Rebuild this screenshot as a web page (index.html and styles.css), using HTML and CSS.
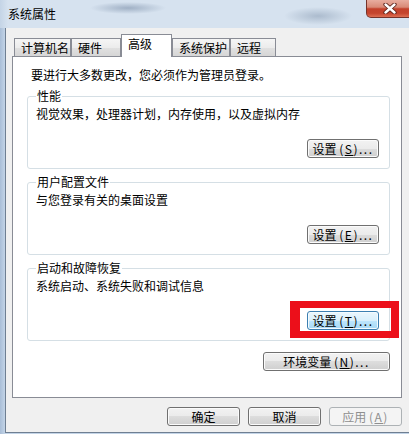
FILE: index.html
```html
<!DOCTYPE html>
<html lang="zh-CN">
<head>
<meta charset="utf-8">
<title>系统属性</title>
<link rel="stylesheet" href="styles.css">
</head>
<body>
<div class="window">
  <div class="titlebar">
    <span class="title">系统属性</span>
    <div class="close">
      <svg width="14" height="11" viewBox="0 0 14 11">
        <path d="M2.5 1.5 L11.5 9.5 M11.5 1.5 L2.5 9.5" stroke="#5a2119" stroke-width="4.2" stroke-linecap="round" fill="none"/>
        <path d="M2.5 1.5 L11.5 9.5 M11.5 1.5 L2.5 9.5" stroke="#ffffff" stroke-width="2.4" stroke-linecap="round" fill="none"/>
      </svg>
    </div>
  </div>
  <div class="client">
    <div class="tabs">
      <div class="tab tab-name">计算机名</div>
      <div class="tab tab-hw">硬件</div>
      <div class="tab tab-adv active">高级</div>
      <div class="tab tab-prot">系统保护</div>
      <div class="tab tab-remote">远程</div>
    </div>
    <div class="panel">
      <p class="intro">要进行大多数更改，您必须作为管理员登录。</p>
      <fieldset class="group">
        <legend>性能</legend>
        <p class="desc">视觉效果，处理器计划，内存使用，以及虚拟内存</p>
        <div class="group-actions"><button class="btn">设置 <span class="key">(<u>S</u>)...</span></button></div>
      </fieldset>
      <fieldset class="group">
        <legend>用户配置文件</legend>
        <p class="desc">与您登录有关的桌面设置</p>
        <div class="group-actions"><button class="btn">设置 <span class="key">(<u>E</u>)...</span></button></div>
      </fieldset>
      <fieldset class="group">
        <legend>启动和故障恢复</legend>
        <p class="desc">系统启动、系统失败和调试信息</p>
        <div class="group-actions"><button class="btn hot">设置 <span class="key">(<u>T</u>)...</span></button></div>
      </fieldset>
      <div class="panel-actions"><button class="btn wide">环境变量 <span class="key">(<u>N</u>)...</span></button></div>
      <div class="annotation"></div>
    </div>
    <div class="dialog-actions">
      <button class="btn dlg">确定</button>
      <button class="btn dlg">取消</button>
      <button class="btn dlg disabled">应用 <span class="key">(<u>A</u>)</span></button>
    </div>
  </div>
</div>
</body>
</html>
```

FILE: styles.css
```css
body {
  margin: 0;
  background: #ffffff;
  font-family: "Noto Sans CJK SC", "Liberation Sans", sans-serif;
  font-size: 12px;
  color: #000;
}

.window {
  width: 409px;
  height: 434px;
  overflow: hidden;
  display: flex;
  flex-direction: column;
  padding-bottom: 1px;
  box-sizing: border-box;
  background: linear-gradient(90deg, #a9bed7 0px, #c3d4e7 5px, #c3d4e7 100%);
}

.titlebar {
  height: 28px;
  flex: none;
  display: flex;
  align-items: flex-start;
  background:
    radial-gradient(ellipse 38px 6px at 128px 8px, rgba(115, 135, 162, 0.55), rgba(115, 135, 162, 0)),
    radial-gradient(ellipse 34px 9px at 318px 16px, rgba(120, 140, 165, 0.45), rgba(120, 140, 165, 0)),
    linear-gradient(90deg, #c4d4e6 0px, #d6e2ef 8px, #d6e2ef 100%);
}

.title {
  line-height: 28px;
  padding-left: 8px;
}

.close {
  margin-left: auto;
  margin-right: -5px;
  width: 48px;
  height: 18px;
  box-sizing: border-box;
  border: 1px solid #76332a;
  border-top: none;
  border-radius: 0 0 5px 5px;
  background: linear-gradient(#e8ad9f 0%, #d98a77 42%, #c3412b 52%, #c5452e 78%, #de6f53 100%);
  display: flex;
  align-items: center;
  justify-content: center;
}

.client {
  flex: 1;
  margin-left: 5px;
  border-left: 1px solid #6f7f92;
  border-bottom: 1px solid #6f7f92;
  background: #f0f0f0;
  padding-left: 6px;
}

.tabs {
  display: flex;
  align-items: flex-end;
  height: 22px;
  margin-top: 6px;
  padding-left: 2px;
}

.tab {
  height: 18px;
  box-sizing: border-box;
  border: 1px solid #898c95;
  border-bottom: none;
  padding-left: 6px;
  line-height: 17px;
  white-space: nowrap;
  background: linear-gradient(#f5f5f5, #ececec 50%, #e1e1e1 50%, #d6d6d6);
}

.tab-name { width: 57px; }
.tab-hw { width: 50px; }
.tab-adv { width: 51px; }
.tab-prot { width: 58px; }
.tab-remote { width: 46px; }

.tab.active {
  height: 23px;
  margin-bottom: -1px;
  padding-top: 1px;
  line-height: 16px;
  background: #ffffff;
  position: relative;
  z-index: 1;
}

.panel {
  width: 390px;
  height: 342px;
  box-sizing: border-box;
  border: 1px solid #898c95;
  background: #ffffff;
  padding: 10px 11px 0 14px;
  position: relative;
}

.intro {
  margin: 0 0 5px;
  padding-left: 4px;
  line-height: 16px;
}

.group {
  margin: 0;
  padding: 0 10px 10px 8px;
  border: 1px solid #d5dfe5;
  border-radius: 3px;
}

.group + .group {
  margin-top: 5px;
}

.group legend {
  padding: 0 1px;
  line-height: 16px;
}

.desc {
  margin: 2px 0 0;
  line-height: 16px;
}

.group-actions,
.panel-actions {
  display: flex;
  justify-content: flex-end;
}

.group-actions {
  margin-top: 17px;
}

.panel-actions {
  margin-top: 11px;
}

.btn {
  width: 72px;
  height: 19px;
  box-sizing: border-box;
  padding: 0;
  font-family: inherit;
  font-size: 12px;
  line-height: 15px;
  color: #000;
  border: 1px solid #707070;
  border-radius: 3px;
  background: linear-gradient(#f2f2f2, #ebebeb 50%, #dddddd 50%, #cfcfcf);
  box-shadow: inset 0 0 0 1px #fbfbfb;
  white-space: nowrap;
}

.btn .key {
  letter-spacing: 1.5px;
}

.btn u {
  text-decoration: underline;
  text-underline-offset: 1px;
}

.btn.wide {
  width: 127px;
}

.btn.hot {
  border-color: #3c7fb1;
  background: linear-gradient(#eaf6fd, #d9f0fc 50%, #bee6fd 50%, #a7d9f5);
  box-shadow: inset 0 0 0 1px #f4fbff;
}

.annotation {
  position: absolute;
  left: 277px;
  top: 244px;
  width: 109px;
  height: 37px;
  box-sizing: border-box;
  border-style: solid;
  border-color: #ec0f1a;
  border-width: 7px 8px 7px 10px;
}

.dialog-actions {
  width: 390px;
  display: flex;
  justify-content: flex-end;
  gap: 8px;
  margin-top: 9px;
}

.btn.dlg {
  width: 73px;
}

.btn.disabled {
  color: #8f8f8f;
  border-color: #adb2b5;
  background: #f4f4f4;
  box-shadow: none;
}
```
